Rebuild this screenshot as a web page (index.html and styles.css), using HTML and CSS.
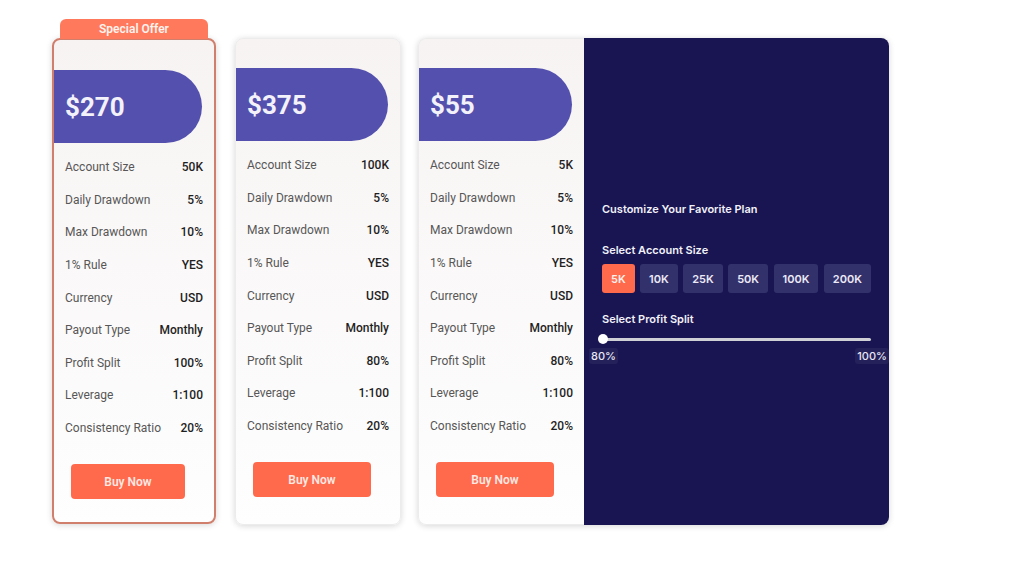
FILE: index.html
```html
<!DOCTYPE html>
<html>
<head>
<meta charset="utf-8">
<link rel="stylesheet" href="styles.css">
</head>
<body>
<div class="plans">
  <div class="card card-special">
    <div class="badge">Special Offer</div>
    <div class="banner">$270</div>
    <div class="rows">
      <div class="row"><span class="label">Account Size</span><span class="value">50K</span></div>
      <div class="row"><span class="label">Daily Drawdown</span><span class="value">5%</span></div>
      <div class="row"><span class="label">Max Drawdown</span><span class="value">10%</span></div>
      <div class="row"><span class="label">1% Rule</span><span class="value">YES</span></div>
      <div class="row"><span class="label">Currency</span><span class="value">USD</span></div>
      <div class="row"><span class="label">Payout Type</span><span class="value">Monthly</span></div>
      <div class="row"><span class="label">Profit Split</span><span class="value">100%</span></div>
      <div class="row"><span class="label">Leverage</span><span class="value">1:100</span></div>
      <div class="row"><span class="label">Consistency Ratio</span><span class="value">20%</span></div>
    </div>
    <button class="buy">Buy Now</button>
  </div>

  <div class="card card-plain">
    <div class="banner">$375</div>
    <div class="rows">
      <div class="row"><span class="label">Account Size</span><span class="value">100K</span></div>
      <div class="row"><span class="label">Daily Drawdown</span><span class="value">5%</span></div>
      <div class="row"><span class="label">Max Drawdown</span><span class="value">10%</span></div>
      <div class="row"><span class="label">1% Rule</span><span class="value">YES</span></div>
      <div class="row"><span class="label">Currency</span><span class="value">USD</span></div>
      <div class="row"><span class="label">Payout Type</span><span class="value">Monthly</span></div>
      <div class="row"><span class="label">Profit Split</span><span class="value">80%</span></div>
      <div class="row"><span class="label">Leverage</span><span class="value">1:100</span></div>
      <div class="row"><span class="label">Consistency Ratio</span><span class="value">20%</span></div>
    </div>
    <button class="buy">Buy Now</button>
  </div>

  <div class="combo">
    <div class="card card-joined">
      <div class="banner">$55</div>
      <div class="rows">
        <div class="row"><span class="label">Account Size</span><span class="value">5K</span></div>
        <div class="row"><span class="label">Daily Drawdown</span><span class="value">5%</span></div>
        <div class="row"><span class="label">Max Drawdown</span><span class="value">10%</span></div>
        <div class="row"><span class="label">1% Rule</span><span class="value">YES</span></div>
        <div class="row"><span class="label">Currency</span><span class="value">USD</span></div>
        <div class="row"><span class="label">Payout Type</span><span class="value">Monthly</span></div>
        <div class="row"><span class="label">Profit Split</span><span class="value">80%</span></div>
        <div class="row"><span class="label">Leverage</span><span class="value">1:100</span></div>
        <div class="row"><span class="label">Consistency Ratio</span><span class="value">20%</span></div>
      </div>
      <button class="buy">Buy Now</button>
    </div>

    <div class="panel">
      <div class="panel-title">Customize Your Favorite Plan</div>
      <div class="panel-label">Select Account Size</div>
      <div class="sizes">
        <button class="size active">5K</button>
        <button class="size">10K</button>
        <button class="size">25K</button>
        <button class="size">50K</button>
        <button class="size">100K</button>
        <button class="size">200K</button>
      </div>
      <div class="panel-label split-label">Select Profit Split</div>
      <div class="slider">
        <div class="track"></div>
        <div class="thumb"></div>
      </div>
      <div class="slider-labels">
        <span class="tick">80%</span>
        <span class="tick">100%</span>
      </div>
    </div>
  </div>
</div>
</body>
</html>
```

FILE: styles.css
```css
* { box-sizing: border-box; }

html, body {
  margin: 0;
  padding: 0;
  background: #ffffff;
  width: 1024px;
  height: 572px;
  overflow: hidden;
}

body {
  font-family: Roboto, "Liberation Sans", sans-serif;
}

.plans {
  display: flex;
  align-items: flex-start;
  padding: 38px 0 0 52px;
}

.card {
  position: relative;
  width: 166px;
  height: 487px;
  border-radius: 8px;
  background: linear-gradient(#f7f3f3, #fefefe);
  box-shadow: 0 1px 6px rgba(0, 0, 0, 0.16);
  border: 1px solid #ececec;
  padding-top: 29px;
  display: flex;
  flex-direction: column;
}

.card-special {
  width: 164px;
  height: 486px;
  border: 2px solid #cf7f6c;
  margin-right: 19px;
  padding-top: 30px;
}

.card-plain {
  margin-right: 17px;
}

.badge {
  position: absolute;
  left: 6px;
  top: -21px;
  width: 148px;
  height: 20px;
  background: #ff7a5d;
  color: #fff3ee;
  border-radius: 6px 6px 0 0;
  font-family: Roboto, sans-serif;
  font-weight: 600;
  font-size: 12px;
  line-height: 20px;
  text-align: center;
}

.banner {
  height: 73px;
  margin-right: 12px;
  background: #5451ae;
  border-radius: 0 37px 37px 0;
  color: #f3f1fa;
  font-size: 26px;
  font-weight: 700;
  display: flex;
  align-items: center;
  padding-left: 11px;
}

.rows {
  margin-top: 8px;
  padding: 0 11px;
}

.row {
  height: 32.6px;
  display: flex;
  align-items: center;
  justify-content: space-between;
  font-size: 12px;
}

.label {
  color: #575757;
}

.value {
  color: #1f1f1f;
  font-weight: 500;
}

.buy {
  margin: 20px 0 0 17px;
  width: 118px;
  height: 35px;
  border: none;
  border-radius: 4px;
  background: #ff6a4d;
  color: #fde8e2;
  font-family: Roboto, sans-serif;
  font-weight: 600;
  font-size: 12px;
  cursor: pointer;
}

.card-special .buy {
  width: 114px;
}

.combo {
  display: flex;
  border-radius: 8px;
  box-shadow: 0 1px 6px rgba(0, 0, 0, 0.16);
}

.card-joined {
  border-radius: 8px 0 0 8px;
  box-shadow: none;
  border-right: none;
}

.panel {
  width: 305px;
  height: 487px;
  background: #181552;
  border-radius: 0 8px 8px 0;
  padding: 163px 18px 0 18px;
  font-family: Inter, "Liberation Sans", sans-serif;
  color: #f2f1f8;
}

.panel-title {
  font-size: 11px;
  font-weight: 600;
  line-height: 16px;
}

.panel-label {
  font-size: 11px;
  font-weight: 600;
  line-height: 16px;
  margin-top: 25px;
}

.split-label {
  margin-top: 18px;
}

.sizes {
  display: flex;
  justify-content: space-between;
  margin-top: 6px;
}

.size {
  height: 29px;
  padding: 0 9px;
  border: none;
  border-radius: 3px;
  background: #33316c;
  color: #eceaf6;
  font-family: Inter, "Liberation Sans", sans-serif;
  font-weight: 600;
  font-size: 11px;
}

.size.active {
  background: #ff6a4d;
  color: #fff1ec;
}

.slider {
  position: relative;
  height: 10px;
  margin-top: 7px;
}

.track {
  position: absolute;
  left: 0;
  right: 0;
  top: 4px;
  height: 3px;
  border-radius: 2px;
  background: #cfcfd6;
}

.thumb {
  position: absolute;
  left: -4px;
  top: 0;
  width: 10px;
  height: 10px;
  border-radius: 50%;
  background: #ffffff;
}

.slider-labels {
  display: flex;
  justify-content: space-between;
  margin: 4px -18px 0 -13px;
}

.tick {
  font-size: 11px;
  font-weight: 500;
  line-height: 16px;
  padding: 0 2px;
  border-radius: 3px;
  background: rgba(255, 255, 255, 0.05);
  color: #e8e7f2;
}
```
